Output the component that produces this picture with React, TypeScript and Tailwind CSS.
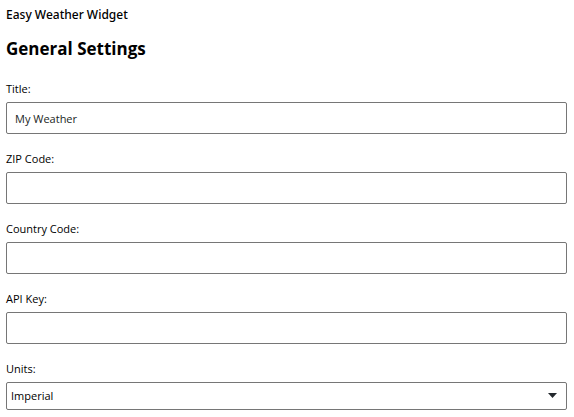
import { useState } from "react";

const fields = [
  { id: "title", label: "Title:", initial: "My Weather" },
  { id: "zip", label: "ZIP Code:", initial: "" },
  { id: "country", label: "Country Code:", initial: "" },
  { id: "api-key", label: "API Key:", initial: "" },
];

function TextField({ id, label, initial }: { id: string; label: string; initial: string }) {
  const [value, setValue] = useState(initial);
  return (
    <div className="flex flex-col gap-1">
      <label htmlFor={id} className="text-[11px] leading-[18px]">
        {label}
      </label>
      <input
        id={id}
        type="text"
        value={value}
        onChange={(e) => setValue(e.target.value)}
        className="h-8 w-full rounded-xs border border-[#767676] bg-white px-2 text-[11px] text-[#1a1f24]"
      />
    </div>
  );
}

export default function App() {
  return (
    <main className="bg-white px-1.5 pt-1.5 pr-[7px] font-['Open_Sans','Noto_Sans',sans-serif] text-black">
      <p className="font-['Noto_Sans','Open_Sans',sans-serif] text-[12px] leading-[18px] font-medium">Easy Weather Widget</p>
      <h1 className="mt-3 mb-[18px] text-[17px] leading-[26px] font-bold">General Settings</h1>
      <form className="flex flex-col gap-4">
        {fields.map((f) => (
          <TextField key={f.id} {...f} />
        ))}
        <div className="flex flex-col gap-1">
          <label htmlFor="units" className="text-[11px] leading-[18px]">
            Units:
          </label>
          <div className="relative">
            <select
              id="units"
              className="h-7 w-full appearance-none rounded-xs border border-[#767676] bg-white px-1 text-[11px]"
            >
              <option>Imperial</option>
              <option>Metric</option>
            </select>
            <svg className="pointer-events-none absolute top-[11px] right-[10px]" width="9" height="5" viewBox="0 0 9 5">
              <path d="M0 0h9L4.5 5z" fill="#23282d" />
            </svg>
          </div>
        </div>
      </form>
    </main>
  );
}
